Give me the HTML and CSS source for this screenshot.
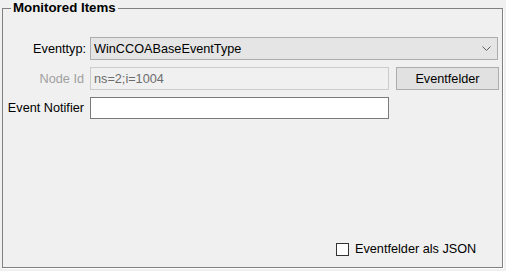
FILE: index.html
```html
<!DOCTYPE html>
<html lang="de">

<head>
    <meta charset="UTF-8">
    <meta name="viewport" content="width=device-width, initial-scale=1.0">
    <title>Monitored Items</title>
    <link rel="stylesheet" href="styles.css">
</head>

<body>
    <div class="group">
        <span class="group-title">Monitored Items</span>
        <div class="form">
            <label class="lbl">Eventtyp:</label>
            <div class="combo">
                <span class="combo-text">WinCCOABaseEventType</span>
                <svg class="chevron" width="9" height="5" viewBox="0 0 9 5">
                    <path d="M0.5 0.5 L4.5 4.5 L8.5 0.5" fill="none" stroke="#606060" stroke-width="1"/>
                </svg>
            </div>

            <label class="lbl disabled">Node Id</label>
            <div class="row">
                <div class="textbox readonly">ns=2;i=1004</div>
                <button class="btn">Eventfelder</button>
            </div>

            <label class="lbl notifier">Event Notifier</label>
            <div class="row">
                <div class="textbox editable"></div>
            </div>
        </div>
        <div class="check-row">
            <span class="checkbox"></span>
            <span class="check-label">Eventfelder als JSON</span>
        </div>
    </div>
</body>

</html>
```

FILE: styles.css
```css
* {
    padding: 0;
    margin: 0;
    box-sizing: border-box;
}

body {
    width: 506px;
    height: 271px;
    background: #f0f0f0;
    font-family: "Liberation Sans", Arial, sans-serif;
    font-size: 12.7px;
    color: #000;
    overflow: hidden;
}

.group {
    position: relative;
    margin: 8px 0 0 2px;
    width: 501px;
    height: 260px;
    border: 1px solid #808080;
    box-shadow: 1px 1px 0 #ffffff;
    display: flex;
    flex-direction: column;
}

/* title sits over the top border */
.group-title {
    position: absolute;
    top: -9px;
    left: 8px;
    padding: 0 2px;
    background: #f0f0f0;
    font-weight: bold;
    font-size: 13.3px;
    line-height: 16px;
}

.form {
    display: grid;
    grid-template-columns: 80px 1fr;
    column-gap: 3px;
    row-gap: 7px;
    padding: 28px 0 0 4px;
    align-items: center;
}

.lbl {
    text-align: right;
    white-space: nowrap;
    padding-right: 1px;
}

.lbl.disabled {
    color: #a0a0a0;
    padding-right: 3px;
}

.lbl.notifier {
    padding-right: 3px;
}

.combo {
    width: 408px;
    height: 23px;
    border: 1px solid #adadad;
    background: #e5e5e5;
    display: flex;
    align-items: center;
    justify-content: space-between;
    padding: 0 6px 0 3px;
}

.chevron {
    display: block;
}

.row {
    display: flex;
    align-items: center;
    gap: 7px;
}

.textbox {
    width: 299px;
    display: flex;
    align-items: center;
    padding-left: 3px;
}

.readonly {
    height: 23px;
    background: #f0f0f0;
    border: 1px solid #cccccc;
    color: #6d6d6d;
}

.editable {
    height: 22px;
    background: #ffffff;
    border: 1px solid #7a7a7a;
}

.btn {
    width: 103px;
    height: 23px;
    border: 1px solid #adadad;
    background: #e1e1e1;
    font-family: inherit;
    font-size: inherit;
    color: #000;
}

.check-row {
    margin-top: auto;
    display: flex;
    align-items: center;
    gap: 6px;
    padding: 0 0 10px 333px;
    height: 26px;
}

.checkbox {
    width: 13px;
    height: 13px;
    border: 1px solid #333333;
    background: #ffffff;
}
```
